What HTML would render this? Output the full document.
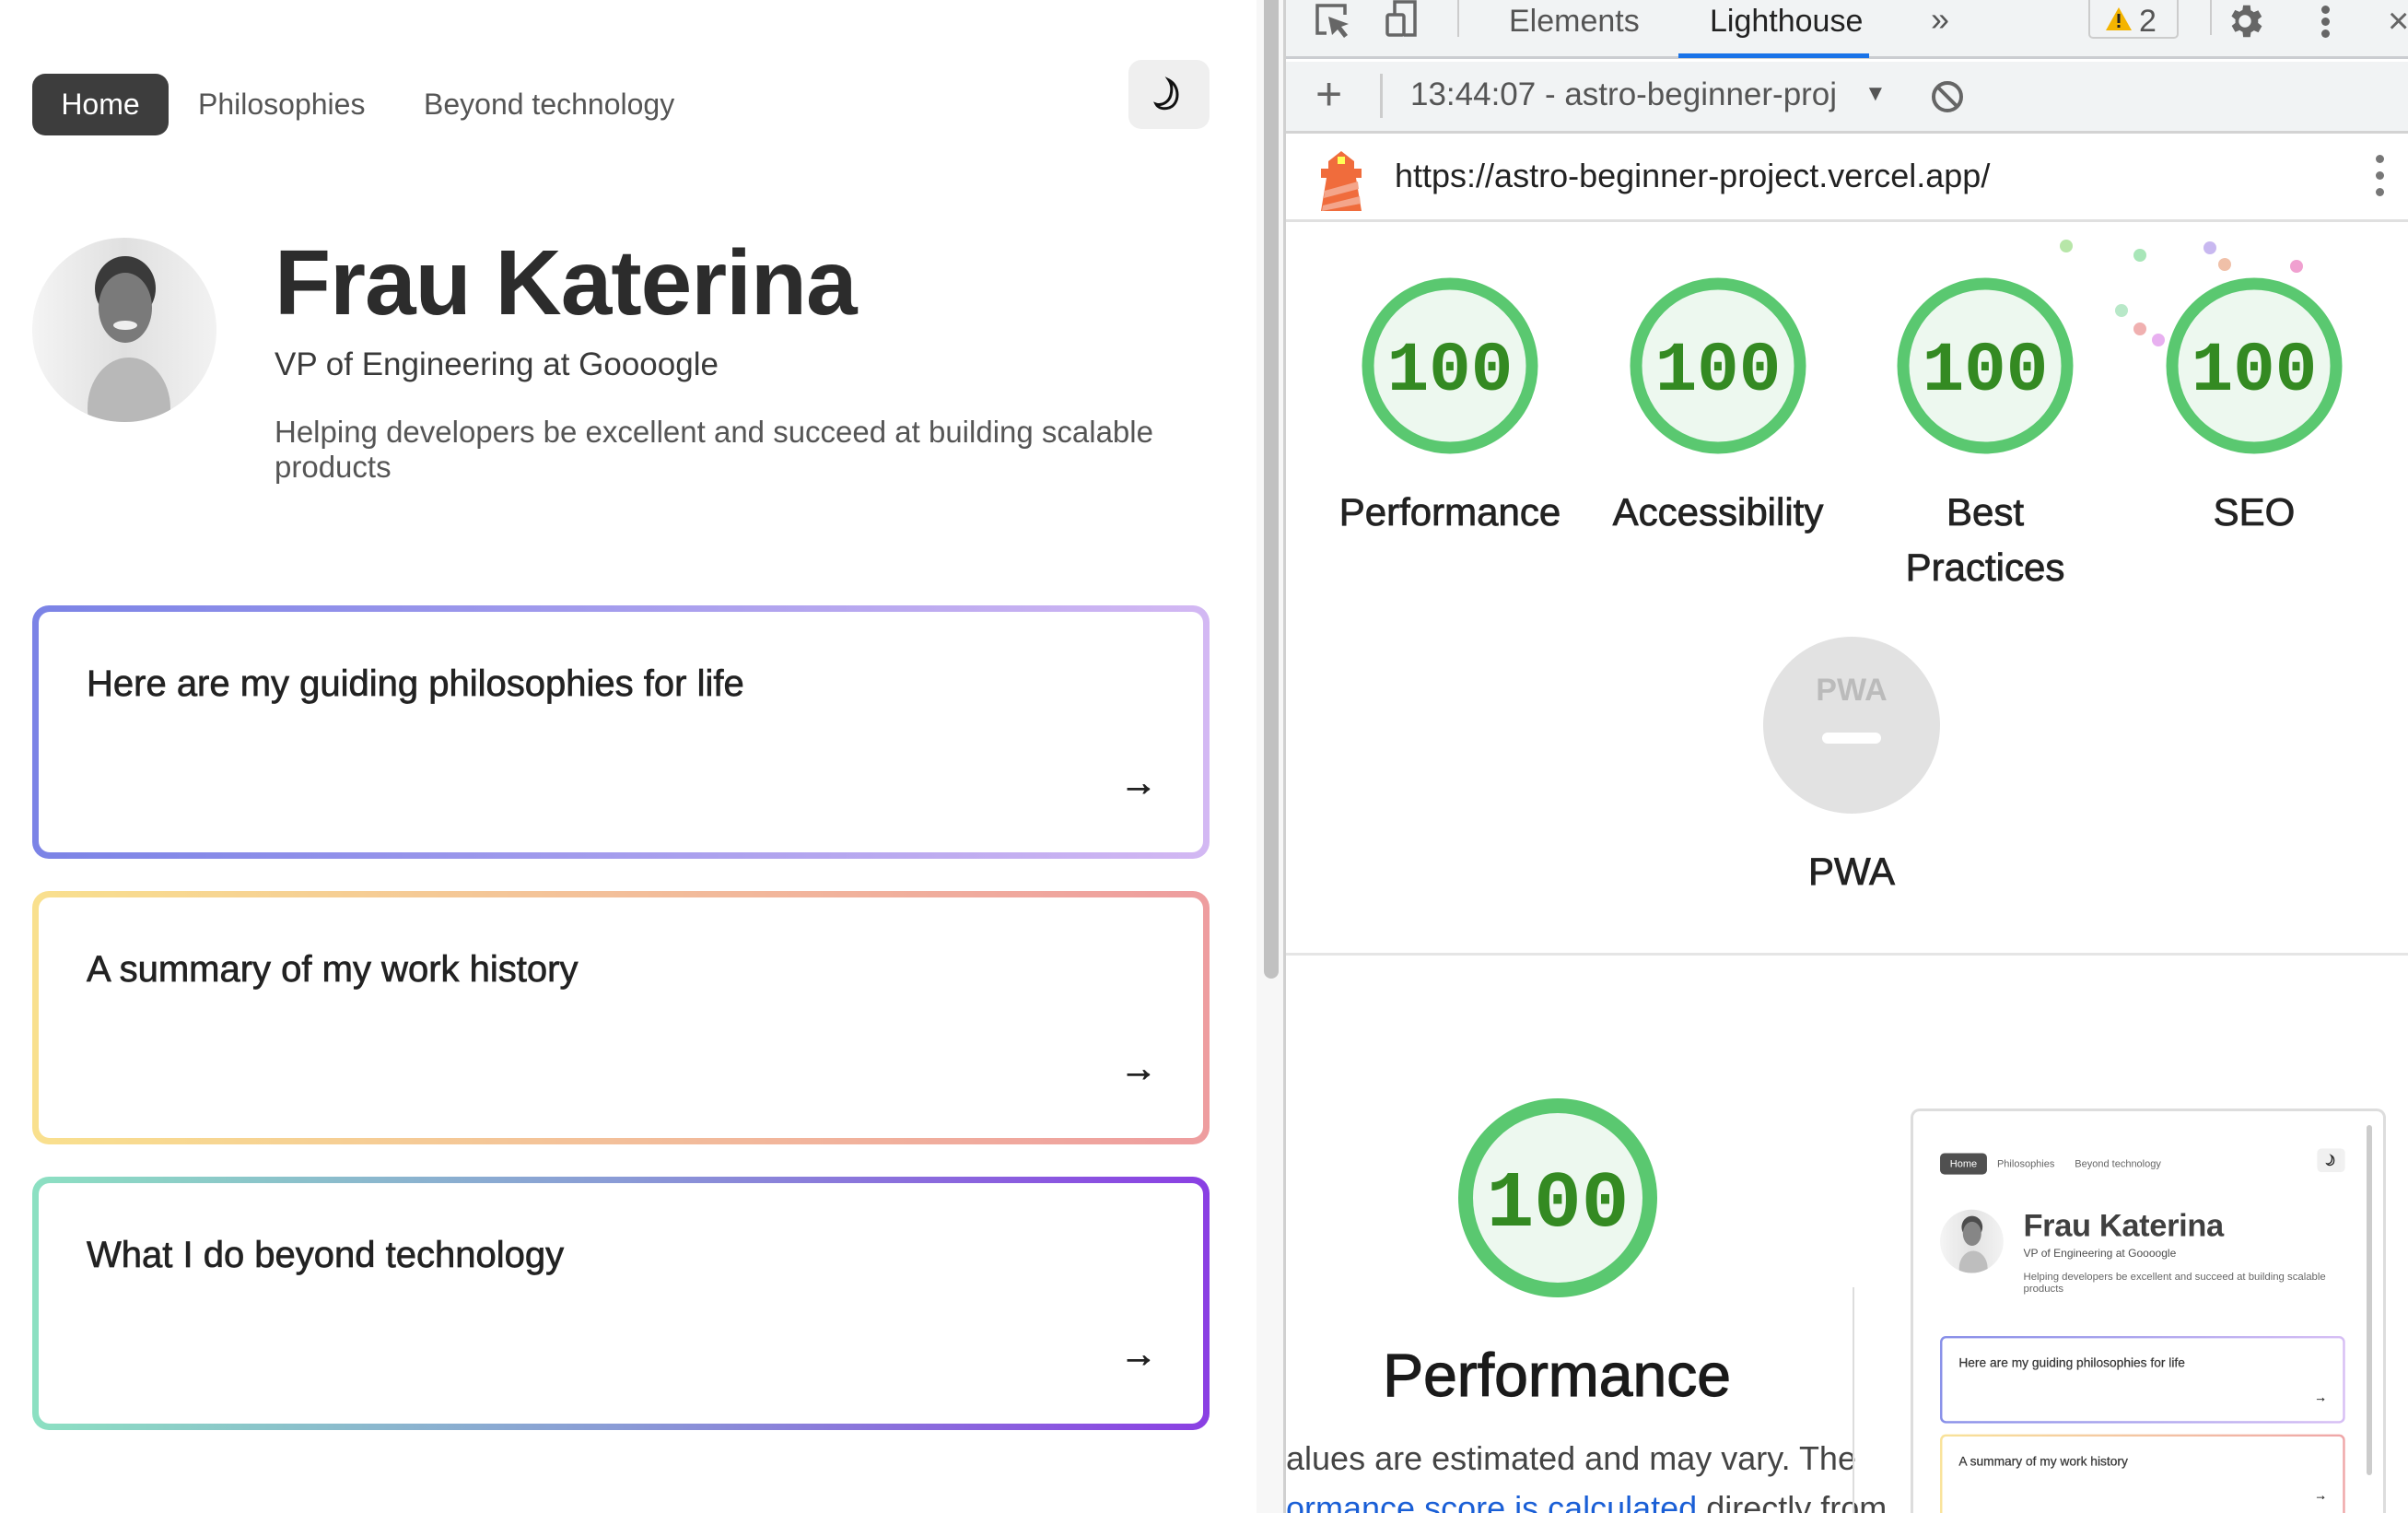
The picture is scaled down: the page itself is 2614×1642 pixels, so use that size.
<!DOCTYPE html>
<html><head><meta charset="utf-8"><style>
*{box-sizing:border-box;margin:0;padding:0}
html,body{width:2614px;height:1642px;overflow:hidden}
body{background:#fff;font-family:"Liberation Sans",sans-serif;position:relative}
.abs{position:absolute}
.pg{position:absolute;left:0;top:0;width:1364px;height:1642px;color:#333}
.home{position:absolute;left:35px;top:80px;width:148px;height:67px;background:#3d3d3d;color:#fff;border-radius:14px;font-size:32px;line-height:67px;text-align:center}
.nav{position:absolute;top:80px;line-height:67px;font-size:32px;color:#555}
.moon{position:absolute;left:1225px;top:65px;width:88px;height:75px;background:#efefef;border-radius:14px}
.av{position:absolute;left:35px;top:258px;width:200px;height:200px;border-radius:50%;overflow:hidden;background:linear-gradient(90deg,#f4f4f4,#e0e0e0 50%,#f2f2f2)}
.av i{position:absolute;display:block;border-radius:50%}
.name{position:absolute;left:298px;top:250px;font-size:100px;font-weight:bold;color:#2c2c2c;letter-spacing:-1px}
.sub{position:absolute;left:298px;top:376px;font-size:35px;color:#3a3a3a}
.desc{position:absolute;left:298px;top:450px;width:1040px;font-size:33px;line-height:38px;color:#555}
.card{position:absolute;left:35px;width:1278px;height:275px;border-radius:18px;padding:7px}
.card .in{background:#fff;width:100%;height:100%;border-radius:12px;position:relative}
.card .t{position:absolute;left:52px;top:56px;font-size:40px;color:#222;-webkit-text-stroke:0.7px #222}
.card .ar{position:absolute;right:50px;bottom:52px;font-size:40px;color:#222;-webkit-text-stroke:1px #222}
.dt{position:absolute;left:1396px;top:0;width:1218px;height:1642px;background:#fff;overflow:hidden}
.lbl{font-weight:bold}
</style></head><body>

<div class="pg">
<div class="home">Home</div>
<div class="nav" style="left:215px">Philosophies</div>
<div class="nav" style="left:460px">Beyond technology</div>
<div class="moon"><svg width="88" height="75" viewBox="0 0 88 75"><path d="M44 22 C56 28 56 48 44 52 C38 54 32 52 30 48 C36 50 44 46 46 38 C48 30 46 25 44 22Z" fill="none" stroke="#111" stroke-width="3"/></svg></div>
<div class="av"><i style="left:60px;top:130px;width:90px;height:110px;background:#b8b8b8"></i><i style="left:68px;top:20px;width:66px;height:70px;background:#3a3a3a"></i><i style="left:72px;top:38px;width:58px;height:76px;background:#7a7a7a"></i><i style="left:88px;top:90px;width:26px;height:10px;background:#eee"></i></div>
<div class="name">Frau Katerina</div>
<div class="sub">VP of Engineering at Goooogle</div>
<div class="desc">Helping developers be excellent and succeed at building scalable products</div>
<div class="card" style="top:657px;background:linear-gradient(90deg,#7b83e6,#a59ded 50%,#d3b8f3)"><div class="in"><div class="t">Here are my guiding philosophies for life</div><div class="ar">→</div></div></div>
<div class="card" style="top:967px;background:linear-gradient(90deg,#f9e08e,#f3bf9a 50%,#ee9d9f)"><div class="in"><div class="t">A summary of my work history</div><div class="ar">→</div></div></div>
<div class="card" style="top:1277px;background:linear-gradient(90deg,#8ce0c2,#8a9bd6 50%,#8a3fe3)"><div class="in"><div class="t">What I do beyond technology</div><div class="ar">→</div></div></div>
</div>

<div class="abs" style="left:1364px;top:0;width:32px;height:1642px;background:#f7f7f7"></div>
<div class="abs" style="left:1372px;top:0;width:16px;height:1062px;background:#c1c1c1;border-radius:0 0 8px 8px"></div>
<div class="abs" style="left:1393px;top:0;width:3px;height:1642px;background:#d0d0d0"></div>

<div class="dt">
<div class="abs" style="left:0;top:0;width:1218px;height:64px;background:#f1f3f4;border-bottom:3px solid #cbcdd1"></div>
<svg class="abs" style="left:28px;top:0" width="120" height="44" viewBox="0 0 120 44"><path d="M16 36 H6 V6 H36 V16" fill="none" stroke="#666" stroke-width="3.5"/><path d="M18 18 L40 26 L32 29 L39 38 L35 41 L28 32 L22 38Z" fill="#666"/><rect x="82" y="16" width="18" height="22" rx="2" fill="none" stroke="#666" stroke-width="3.5"/><path d="M90 16 V2 H112 V38 H100" fill="none" stroke="#666" stroke-width="3.5"/></svg>
<div class="abs" style="left:186px;top:0;width:2px;height:40px;background:#ccc"></div>
<div class="abs" style="left:242px;top:0;font-size:34px;color:#555;line-height:46px">Elements</div>
<div class="abs" style="left:460px;top:0;font-size:34px;color:#222;line-height:46px">Lighthouse</div>
<div class="abs" style="left:426px;top:58px;width:207px;height:5px;background:#1a73e8"></div>
<div class="abs" style="left:700px;top:-2px;font-size:36px;color:#555;line-height:46px">»</div>
<div class="abs" style="left:871px;top:0;width:98px;height:42px;border:2px solid #ccc;border-top:none;border-radius:0 0 5px 5px;background:#f1f3f4"></div>
<svg class="abs" style="left:888px;top:6px" width="32" height="28"><path d="M16 2 L30 27 H2Z" fill="#f4b400"/><rect x="14.5" y="9" width="3" height="10" fill="#222"/><rect x="14.5" y="21" width="3" height="3" fill="#222"/></svg>
<div class="abs" style="left:926px;top:0;font-size:34px;color:#555;line-height:46px">2</div>
<div class="abs" style="left:1003px;top:0;width:2px;height:38px;background:#ccc"></div>
<svg class="abs" style="left:1018px;top:0" width="46" height="46" viewBox="0 0 24 24"><path fill="#666" d="M19.4 13a7.5 7.5 0 000-2l2.1-1.6-2-3.5-2.5 1a7 7 0 00-1.7-1L15 3h-4l-.4 2.7a7 7 0 00-1.7 1l-2.5-1-2 3.5L6.6 11a7.5 7.5 0 000 2l-2.1 1.6 2 3.5 2.5-1a7 7 0 001.7 1L11 21h4l.4-2.7a7 7 0 001.7-1l2.5 1 2-3.5zM12 15.5a3.5 3.5 0 110-7 3.5 3.5 0 010 7z"/></svg>
<div class="abs" style="left:1124px;top:6px;width:9px;height:9px;border-radius:50%;background:#666;box-shadow:0 13px #666,0 26px #666"></div>
<div class="abs" style="left:1196px;top:0;font-size:40px;color:#666;line-height:46px">×</div>

<div class="abs" style="left:0;top:67px;width:1218px;height:78px;background:#f1f3f4;border-bottom:3px solid #d3d3d3"></div>
<div class="abs" style="left:32px;top:72px;font-size:50px;color:#666;line-height:60px">+</div>
<div class="abs" style="left:102px;top:80px;width:3px;height:48px;background:#ccc"></div>
<div class="abs" style="left:135px;top:78px;font-size:35px;color:#555;line-height:50px">13:44:07 - astro-beginner-proj</div>
<div class="abs" style="left:628px;top:82px;font-size:24px;color:#555;line-height:40px">▼</div>
<svg class="abs" style="left:698px;top:85px" width="40" height="40"><circle cx="20" cy="20" r="15" fill="none" stroke="#666" stroke-width="4"/><path d="M10 10 L30 30" stroke="#666" stroke-width="4"/></svg>

<svg class="abs" style="left:36px;top:157px" width="48" height="74" viewBox="0 0 48 74"><path d="M10 18 L24 7 L38 18 V26 H10Z" fill="#f06c3c"/><rect x="2" y="26" width="44" height="10" fill="#f06c3c"/><rect x="20" y="13" width="8" height="8" fill="#ff5"/><path d="M8 36 H40 L46 72 H2Z" fill="#f06c3c"/><path d="M6 50 L42 40 L43 48 L5 58Z M4 66 L44 56 L45 64 L3 72Z" fill="#f4a58a"/></svg>
<div class="abs" style="left:118px;top:166px;font-size:36px;color:#222;line-height:50px">https://astro-beginner-project.vercel.app/</div>
<div class="abs" style="left:1183px;top:168px;width:9px;height:9px;border-radius:50%;background:#777;box-shadow:0 18px #777,0 36px #777"></div>
<div class="abs" style="left:0;top:238px;width:1218px;height:3px;background:#e0e0e0"></div>

<div class="abs" style="left:840px;top:260px;width:14px;height:14px;border-radius:50%;background:#b7e6a8"></div>
<div class="abs" style="left:920px;top:270px;width:14px;height:14px;border-radius:50%;background:#a8e6b8"></div>
<div class="abs" style="left:996px;top:262px;width:14px;height:14px;border-radius:50%;background:#c8b8f0"></div>
<div class="abs" style="left:1012px;top:280px;width:14px;height:14px;border-radius:50%;background:#f0c0a8"></div>
<div class="abs" style="left:1090px;top:282px;width:14px;height:14px;border-radius:50%;background:#f0a0d0"></div>
<div class="abs" style="left:920px;top:350px;width:14px;height:14px;border-radius:50%;background:#f0b0b0"></div>
<div class="abs" style="left:940px;top:362px;width:14px;height:14px;border-radius:50%;background:#e8b0f0"></div>
<div class="abs" style="left:900px;top:330px;width:14px;height:14px;border-radius:50%;background:#b8e8c8"></div>

<svg class="abs" style="left:0;top:240px" width="1218" height="800">
<g font-family="Liberation Mono, monospace" font-size="76" font-weight="bold" fill="#348a22" text-anchor="middle">
<circle cx="178" cy="157" r="89" fill="#edf8ef" stroke="#5ac870" stroke-width="13"/><text x="178" y="183">100</text>
<circle cx="469" cy="157" r="89" fill="#edf8ef" stroke="#5ac870" stroke-width="13"/><text x="469" y="183">100</text>
<circle cx="759" cy="157" r="89" fill="#edf8ef" stroke="#5ac870" stroke-width="13"/><text x="759" y="183">100</text>
<circle cx="1051" cy="157" r="89" fill="#edf8ef" stroke="#5ac870" stroke-width="13"/><text x="1051" y="183">100</text>
</g>
<g font-family="Liberation Sans, sans-serif" font-size="42" fill="#222" text-anchor="middle" stroke="#222" stroke-width="0.8">
<text x="178" y="330">Performance</text><text x="469" y="330">Accessibility</text>
<text x="759" y="330">Best</text><text x="759" y="390">Practices</text><text x="1051" y="330">SEO</text>
<circle cx="614" cy="547" r="96" fill="#e2e2e2" stroke="none"/>
<text x="614" y="520" font-size="34" font-weight="bold" fill="#bbb" stroke="none">PWA</text>
<rect x="582" y="555" width="64" height="12" rx="6" fill="#fff" stroke="none"/>
<text x="614" y="720">PWA</text>
</g>
</svg>
<div class="abs" style="left:0;top:1034px;width:1218px;height:3px;background:#e5e5e5"></div>

<svg class="abs" style="left:180px;top:1185px" width="230" height="230"><circle cx="115" cy="115" r="100" fill="#edf8ef" stroke="#5ac870" stroke-width="16"/><text x="115" y="145" font-family="Liberation Mono, monospace" font-weight="bold" font-size="86" fill="#348a22" text-anchor="middle">100</text></svg>
<div class="abs" style="left:0;top:1452px;width:588px;text-align:center;font-size:66px;color:#1a1a1a;line-height:80px;-webkit-text-stroke:1.2px #1a1a1a">Performance</div>
<div class="abs" style="left:0;top:1560px;font-size:36px;color:#444;line-height:46px;white-space:nowrap">alues are estimated and may vary. The</div>
<div class="abs" style="left:0;top:1614px;font-size:36px;line-height:46px;white-space:nowrap"><span style="color:#1a5fd6;text-decoration:underline">ormance score is calculated</span><span style="color:#444"> directly from</span></div>
<div class="abs" style="left:615px;top:1397px;width:2px;height:245px;background:#ddd"></div>

<div class="abs" style="left:678px;top:1203px;width:516px;height:439px;border:3px solid #ddd;border-bottom:none;border-radius:10px 10px 0 0;background:#fff;overflow:hidden">
<div class="abs" style="left:17px;top:18px;width:1364px;height:1642px;transform:scale(0.344);transform-origin:0 0;opacity:0.9">
<div class="pg">
<div class="home">Home</div>
<div class="nav" style="left:215px">Philosophies</div>
<div class="nav" style="left:460px">Beyond technology</div>
<div class="moon"><svg width="88" height="75" viewBox="0 0 88 75"><path d="M44 22 C56 28 56 48 44 52 C38 54 32 52 30 48 C36 50 44 46 46 38 C48 30 46 25 44 22Z" fill="none" stroke="#111" stroke-width="4"/></svg></div>
<div class="av"><i style="left:60px;top:130px;width:90px;height:110px;background:#b8b8b8"></i><i style="left:68px;top:20px;width:66px;height:70px;background:#3a3a3a"></i><i style="left:72px;top:38px;width:58px;height:76px;background:#7a7a7a"></i></div>
<div class="name">Frau Katerina</div>
<div class="sub">VP of Engineering at Goooogle</div>
<div class="desc">Helping developers be excellent and succeed at building scalable products</div>
<div class="card" style="top:657px;background:linear-gradient(90deg,#7b83e6,#a59ded 50%,#d3b8f3)"><div class="in"><div class="t">Here are my guiding philosophies for life</div><div class="ar">→</div></div></div>
<div class="card" style="top:967px;background:linear-gradient(90deg,#f9e08e,#f3bf9a 50%,#ee9d9f)"><div class="in"><div class="t">A summary of my work history</div><div class="ar">→</div></div></div>
</div></div>
<div class="abs" style="left:492px;top:15px;width:6px;height:380px;background:#ccc;border-radius:3px"></div>
</div>
</div>
</body></html>
